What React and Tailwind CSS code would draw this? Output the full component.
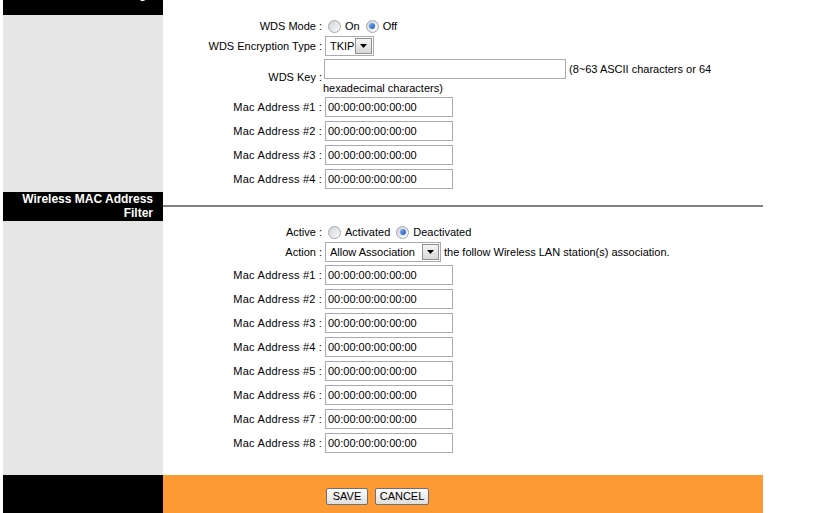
import React from "react";

const Radio = ({ checked }) => (
  <span className="relative inline-flex h-[13px] w-[13px] items-center justify-center rounded-full border border-[#a3a8ad] bg-gradient-to-br from-[#cfd3d7] to-[#fdfdfd]">
    {checked && (
      <span className="h-[6px] w-[6px] rounded-full bg-gradient-to-br from-[#7fb2f2] to-[#1d55b6]" />
    )}
  </span>
);

const Select = ({ value, w }) => (
  <div className={`flex h-[20px] items-center border border-[#a5acb2] bg-white pl-[4px] pr-[1px] ${w}`}>
    <span className="flex-1">{value}</span>
    <span className="flex h-[16px] w-[17px] items-center justify-center border border-[#8e8f8f] bg-gradient-to-b from-[#f6f6f6] to-[#d8d8d8]">
      <svg width="7" height="4" viewBox="0 0 7 4">
        <path d="M0 0h7L3.5 4z" fill="#000" />
      </svg>
    </span>
  </div>
);

const MacInput = () => (
  <input
    readOnly
    value="00:00:00:00:00:00"
    className="h-[20px] w-[128px] border border-[#a5acb2] bg-white px-[2px] text-[11px] outline-none"
  />
);

const Row = ({ label, h = "h-[24px]", wide, children }) => (
  <div className={`flex items-center ${h}`}>
    <div className={`w-[159px] text-right whitespace-nowrap ${wide ? "tracking-[0.25px]" : ""}`}>
      {label}
      <span className="ml-[3px]">:</span>
    </div>
    <div className="flex items-center pl-[3px] tracking-normal">{children}</div>
  </div>
);

export default function App() {
  const filterMacs = [1, 2, 3, 4, 5, 6, 7, 8];

  return (
    <div className="h-[513px] w-[826px] overflow-hidden bg-white font-['Liberation_Sans',Arial,sans-serif] text-[11px] text-black">
      <div className="ml-[3px] w-[760px]">
        {/* top strip, the title above is scrolled off */}
        <div className="flex h-[15px]">
          <div className="w-[160px] overflow-hidden bg-black pr-[10px] text-right">
            <div className="mt-[-13px] text-[12px] leading-[14px] font-bold text-white">Wireless Settings</div>
          </div>
          <div className="flex-1" />
        </div>

        {/* WDS section */}
        <div className="flex">
          <div className="w-[160px] bg-[#e6e6e6]" />
          <div className="flex flex-1 flex-col py-[1px]">
            <Row label="WDS Mode" h="h-[20px]">
              <span className="ml-[3px] flex items-center gap-[4px]">
                <Radio /> <span>On</span>
              </span>
              <span className="ml-[6px] flex items-center gap-[4px]">
                <Radio checked /> <span>Off</span>
              </span>
            </Row>
            <Row label="WDS Encryption Type" h="h-[20px]">
              <Select value="TKIP" w="w-[49px]" />
            </Row>
            <div className="flex h-[39px] items-center">
              <div className="w-[159px] pt-[4px] text-right">
                WDS Key<span className="ml-[3px]">:</span>
              </div>
              <div className="flex flex-col self-stretch pt-[3px] pl-[1px]">
                <div className="flex items-center">
                  <input
                    readOnly
                    className="ml-[1px] h-[20px] w-[242px] border border-[#a5acb2] bg-white outline-none"
                  />
                  <span className="ml-[3px] whitespace-nowrap">(8~63 ASCII characters or 64</span>
                </div>
                <div className="mt-[2px] leading-[14px]">hexadecimal characters)</div>
              </div>
            </div>
            {[1, 2, 3, 4].map((n) => (
              <Row key={n} label={`Mac Address #${n}`} wide>
                <MacInput />
              </Row>
            ))}
          </div>
        </div>

        {/* MAC filter header */}
        <div className="flex h-[29px]">
          <div className="w-[160px] bg-black pr-[10px] text-right text-[12px] leading-[14px] font-bold text-white">
            Wireless MAC Address
            <br />
            Filter
          </div>
          <div className="flex-1 pt-[13px]">
            <div className="h-[2px] bg-[#808080]" />
          </div>
        </div>

        {/* MAC filter section */}
        <div className="flex">
          <div className="w-[160px] bg-[#e6e6e6]" />
          <div className="flex flex-1 flex-col pt-[1px] pb-[20px]">
            <Row label="Active" h="h-[20px]">
              <span className="ml-[3px] flex items-center gap-[4px]">
                <Radio /> <span>Activated</span>
              </span>
              <span className="ml-[6px] flex items-center gap-[4px]">
                <Radio checked /> <span>Deactivated</span>
              </span>
            </Row>
            <Row label="Action" h="h-[20px]">
              <Select value="Allow Association" w="w-[116px]" />
              <span className="ml-[3px] whitespace-nowrap">the follow Wireless LAN station(s) association.</span>
            </Row>
            <div className="h-[1px]" />
            {filterMacs.map((n) => (
              <Row key={n} label={`Mac Address #${n}`} wide>
                <MacInput />
              </Row>
            ))}
          </div>
        </div>

        {/* footer */}
        <div className="flex h-[40px]">
          <div className="w-[160px] bg-black" />
          <div className="flex flex-1 items-start gap-[7px] bg-[#fd9a33] pt-[13px] pl-[163px]">
            <button className="h-[17px] w-[42px] rounded-[2px] border border-[#707070] bg-gradient-to-b from-[#fdfdfd] to-[#dedede] text-[11px] leading-[15px]">
              SAVE
            </button>
            <button className="h-[17px] w-[54px] rounded-[2px] border border-[#707070] bg-gradient-to-b from-[#fdfdfd] to-[#dedede] text-[11px] leading-[15px]">
              CANCEL
            </button>
          </div>
        </div>
      </div>
    </div>
  );
}
